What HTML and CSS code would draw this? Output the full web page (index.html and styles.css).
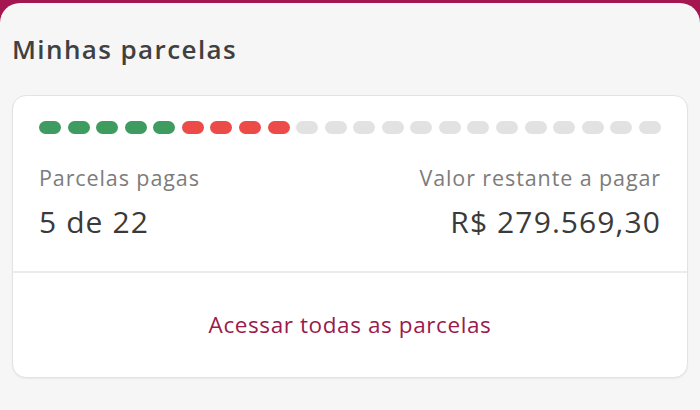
FILE: index.html
```html
<!DOCTYPE html>
<html lang="pt-BR">
<head>
  <meta charset="UTF-8" />
  <title>Minhas parcelas</title>
  <link rel="stylesheet" href="styles.css">
</head>
<body>
  <div class="sheet">
    <h1 class="title">Minhas parcelas</h1>

    <div class="card">
      <div class="card-body">
        <!-- installments track -->
        <div class="dots">
          <span class="dot paid"></span>
          <span class="dot paid"></span>
          <span class="dot paid"></span>
          <span class="dot paid"></span>
          <span class="dot paid"></span>
          <span class="dot late"></span>
          <span class="dot late"></span>
          <span class="dot late"></span>
          <span class="dot late"></span>
          <span class="dot"></span>
          <span class="dot"></span>
          <span class="dot"></span>
          <span class="dot"></span>
          <span class="dot"></span>
          <span class="dot"></span>
          <span class="dot"></span>
          <span class="dot"></span>
          <span class="dot"></span>
          <span class="dot"></span>
          <span class="dot"></span>
          <span class="dot"></span>
          <span class="dot"></span>
        </div>

        <div class="info">
          <div class="col">
            <span class="label">Parcelas pagas</span>
            <span class="value">5 de 22</span>
          </div>
          <div class="col right">
            <span class="label">Valor restante a pagar</span>
            <span class="value">R$ 279.569,30</span>
          </div>
        </div>
      </div>

      <a class="card-link" href="#">Acessar todas as parcelas</a>
    </div>
  </div>
</body>
</html>
```

FILE: styles.css
```css
html, body {
  margin: 0;
  height: 100%;
}

body {
  background: #a3164f;
  font-family: "Open Sans", Lato, sans-serif;
  padding-top: 3px;
  box-sizing: border-box;
}

.sheet {
  background: #f6f6f6;
  border-radius: 20px 20px 0 0;
  height: 100%;
  padding: 28px 12px 0 12px;
  box-sizing: border-box;
}

.title {
  margin: 0 0 28px 0;
  font-size: 26px;
  font-weight: 600;
  color: #404040;
  line-height: 36px;
  letter-spacing: 1.4px;
}

.card {
  background: #fff;
  border: 1px solid #e3e3e3;
  border-radius: 14px;
  box-shadow: 0 1px 2px rgba(0, 0, 0, 0.06);
  overflow: hidden;
}

.card-body {
  padding: 25px 26px 31px 26px;
  border-bottom: 2px solid #ececec;
}

.dots {
  display: flex;
  justify-content: space-between;
}

.dot {
  width: 22px;
  height: 13px;
  border-radius: 7px;
  background: #e2e2e2;
}

.dot.paid {
  background: #3f9c61;
}

.dot.late {
  background: #ec4b47;
}

.info {
  display: flex;
  justify-content: space-between;
  margin-top: 32px;
}

.col {
  display: flex;
  flex-direction: column;
  gap: 14px;
}

.col.right {
  align-items: flex-end;
}

.label {
  font-size: 21.5px;
  color: #7c7c7c;
  line-height: 24px;
  letter-spacing: 0.9px;
}

.value {
  font-size: 30px;
  color: #3a3a3a;
  line-height: 36px;
  letter-spacing: 1.1px;
}

.card-link {
  display: block;
  text-align: center;
  padding: 38px 0 38px 0;
  font-size: 22.5px;
  line-height: 28px;
  color: #9a1a4c;
  text-decoration: none;
  letter-spacing: 0.6px;
}
```
